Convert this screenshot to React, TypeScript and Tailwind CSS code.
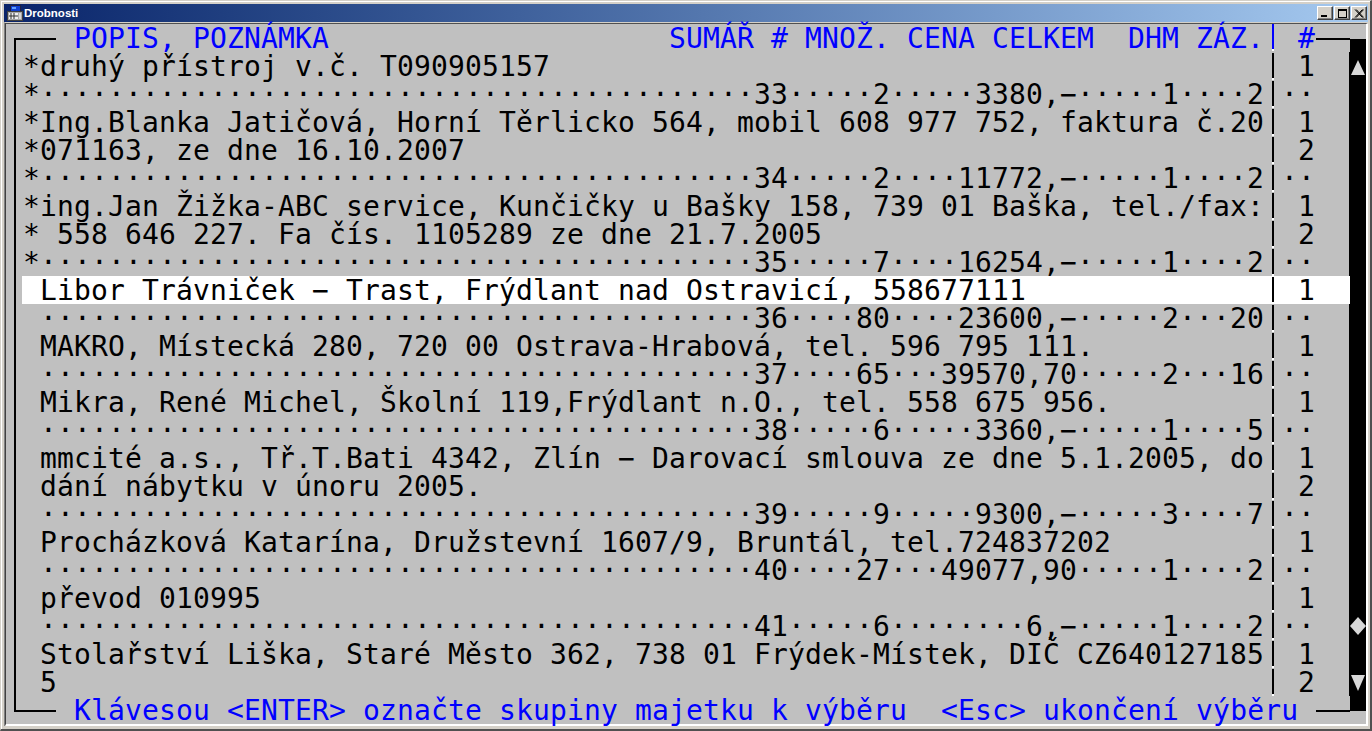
// App.tsx
import React from "react";

type Row = { text: string; num: string; active?: boolean };

// data row of the dos table, columns are padded with middle dots
const data = (mark: string, n: number, qty: string, price: string, dhm: string, zaz: string): Row => ({
  text:
    mark +
    "·".repeat(42) +
    String(n) +
    qty.padStart(6, "·") +
    price.padStart(11, "·") +
    dhm.padStart(6, "·") +
    zaz.padStart(5, "·"),
  num: "··",
});

const line = (text: string, num: string, active = false): Row => ({ text, num: " " + num, active });

const rows: Row[] = [
  line("*druhý přístroj v.č. T090905157", "1"),
  data("*", 33, "2", "3380,−", "1", "2"),
  line("*Ing.Blanka Jatičová, Horní Těrlicko 564, mobil 608 977 752, faktura č.20", "1"),
  line("*071163, ze dne 16.10.2007", "2"),
  data("*", 34, "2", "11772,−", "1", "2"),
  line("*ing.Jan Žižka-ABC service, Kunčičky u Bašky 158, 739 01 Baška, tel./fax:", "1"),
  line("* 558 646 227. Fa čís. 1105289 ze dne 21.7.2005", "2"),
  data("*", 35, "7", "16254,−", "1", "2"),
  line(" Libor Trávniček − Trast, Frýdlant nad Ostravicí, 558677111", "1", true),
  data(" ", 36, "80", "23600,−", "2", "20"),
  line(" MAKRO, Místecká 280, 720 00 Ostrava-Hrabová, tel. 596 795 111.", "1"),
  data(" ", 37, "65", "39570,70", "2", "16"),
  line(" Mikra, René Michel, Školní 119,Frýdlant n.O., tel. 558 675 956.", "1"),
  data(" ", 38, "6", "3360,−", "1", "5"),
  line(" mmcité a.s., Tř.T.Bati 4342, Zlín − Darovací smlouva ze dne 5.1.2005, do", "1"),
  line(" dání nábytku v únoru 2005.", "2"),
  data(" ", 39, "9", "9300,−", "3", "7"),
  line(" Procházková Katarína, Družstevní 1607/9, Bruntál, tel.724837202", "1"),
  data(" ", 40, "27", "49077,90", "1", "2"),
  line(" převod 010995", "1"),
  data(" ", 41, "6", "6,−", "1", "2"),
  line(" Stolařství Liška, Staré Město 362, 738 01 Frýdek-Místek, DIČ CZ640127185", "1"),
  line(" 5", "2"),
];

const cell = "whitespace-pre pt-[1px] font-['DejaVu_Sans_Mono',monospace] text-[28px] leading-[27px] tracking-[0.144px]";

const AppIcon = () => (
  <svg width="17" height="16" viewBox="0 0 17 16" className="shrink-0">
    <rect x="3.5" y="0.5" width="10" height="7" fill="#1040d0" stroke="#202040" />
    <rect x="5" y="2" width="4" height="2" fill="#60a0ff" />
    <rect x="0.5" y="6.5" width="15" height="9" fill="#a8a8a8" stroke="#404040" />
    <rect x="2" y="8" width="9" height="6" fill="#f0f0f0" />
    <path d="M4 8v6M7 8v6M2 11h9" stroke="#303030" strokeWidth="1" />
    <rect x="12" y="8" width="2" height="6" fill="#d8d8d8" />
  </svg>
);

const WinButton = ({ children, className = "" }: { children: React.ReactNode; className?: string }) => (
  <div
    className={`flex h-[14px] w-[16px] items-center justify-center border border-t-white border-l-white border-r-[#404040] border-b-[#404040] bg-[#d4d0c8] shadow-[inset_-1px_-1px_0_#808080] ${className}`}
  >
    {children}
  </div>
);

const Separator = ({ blue }: { blue?: boolean }) => (
  <div className="flex w-[17px] shrink-0 justify-center pl-[1px]">
    {blue ? (
      <div className="h-[27px] w-[2px] bg-[#0000ff] border-b-2 border-white" />
    ) : (
      <div className="mt-[1px] h-[27px] w-[2px] bg-black border-b-2 border-white" />
    )}
  </div>
);

export default function App() {
  return (
    <div className="h-[731px] w-[1372px] overflow-hidden border-t border-l border-r-2 border-b-2 border-t-[#d4d0c8] border-l-[#d4d0c8] border-r-[#505050] border-b-[#505050]">
      <div className="h-full border-t border-l border-white bg-[#d4d0c8] p-[2px]">
        {/* title bar */}
        <div className="flex h-[18px] items-center bg-gradient-to-r from-[#0a246a] to-[#a6caf0] pl-[3px] pr-[1px]">
          <AppIcon />
          <span className="font-['Liberation_Sans',sans-serif] text-[11.5px] font-bold leading-[18px] text-white">
            Drobnosti
          </span>
          <div className="ml-auto flex items-center">
            <WinButton>
              <div className="mt-[6px] mr-[2px] h-[2px] w-[6px] bg-black" />
            </WinButton>
            <WinButton className="ml-[1px]">
              <div className="h-[9px] w-[9px] border border-t-2 border-black" />
            </WinButton>
            <WinButton className="ml-[1px]">
              <svg width="10" height="9" viewBox="0 0 10 9">
                <path d="M1 0.5l7.5 8M2.2 0.5l7.5 8M8.5 0.5l-7.5 8M9.7 0.5l-7.5 8" stroke="#000" strokeWidth="1" />
              </svg>
            </WinButton>
          </div>
        </div>

        {/* client area */}
        <div className="border-t border-l border-t-[#d4d0c8] border-l-[#808080]">
          <div className="border-t border-l border-r-2 border-b-2 border-t-[#505050] border-l-[#404040] border-r-white border-b-white">
            <div className="flex h-[700px] w-[1360px] bg-[#c0c0c0] text-black">
              <div className="w-[1344px] shrink-0">
                {/* header */}
                <div className="flex h-[28px]">
                  <div className="ml-[8px] mt-[14px] h-[14px] w-[42px] shrink-0 border-t-2 border-l-2 border-black" />
                  <div className={`${cell} ml-[18px] w-[1190px] shrink-0 text-[#0000ff]`}>
                    {"POPIS, POZNÁMKA" + " ".repeat(20) + "SUMÁŘ # MNOŽ. CENA CELKEM  DHM ZÁZ."}
                  </div>
                  <Separator blue />
                  <div className={`${cell} text-[#0000ff]`}>{" #"}</div>
                  <div className="ml-auto mt-[14px] h-[2px] w-[34px] bg-black" />
                </div>

                {rows.map((row, i) => (
                  <div key={i} className={`flex h-[28px] border-r ${row.active ? "border-white" : "border-black"}`}>
                    <div className="ml-[8px] w-[8px] shrink-0 border-l-2 border-black" />
                    <div className={`flex flex-1 ${row.active ? "bg-white" : ""}`}>
                      <div className={`${cell} w-[1242px] shrink-0 pl-[1px]`}>{row.text}</div>
                      <Separator />
                      <div className={cell}>{row.num}</div>
                    </div>
                  </div>
                ))}

                {/* footer */}
                <div className="flex h-[28px]">
                  <div className="ml-[8px] h-[16px] w-[42px] shrink-0 border-b-2 border-l-2 border-black" />
                  <div className={`${cell} ml-[18px] text-[#0000ff]`}>
                    Klávesou {"<ENTER>"} označte skupiny majetku k výběru{"  "}
                    {"<Esc>"} ukončení výběru
                  </div>
                  <div className="ml-auto mt-[14px] h-[2px] w-[34px] bg-black" />
                </div>
              </div>

              {/* scroll column */}
              <div className="mt-[15px] flex h-[672px] w-[16px] flex-col bg-black">
                <svg width="16" height="15" viewBox="0 0 16 15" className="mt-[21px]">
                  <path d="M8 0L15 15H1Z" fill="#d8d8d8" />
                </svg>
                <svg width="16" height="18" viewBox="0 0 16 18" className="mt-[542px]">
                  <path d="M8 0L16 9L8 18L0 9Z" fill="#d8d8d8" />
                </svg>
                <svg width="16" height="16" viewBox="0 0 16 16" className="mt-[40px]">
                  <path d="M1 0H15L8 16Z" fill="#d8d8d8" />
                </svg>
              </div>
            </div>
          </div>
        </div>
      </div>
    </div>
  );
}
